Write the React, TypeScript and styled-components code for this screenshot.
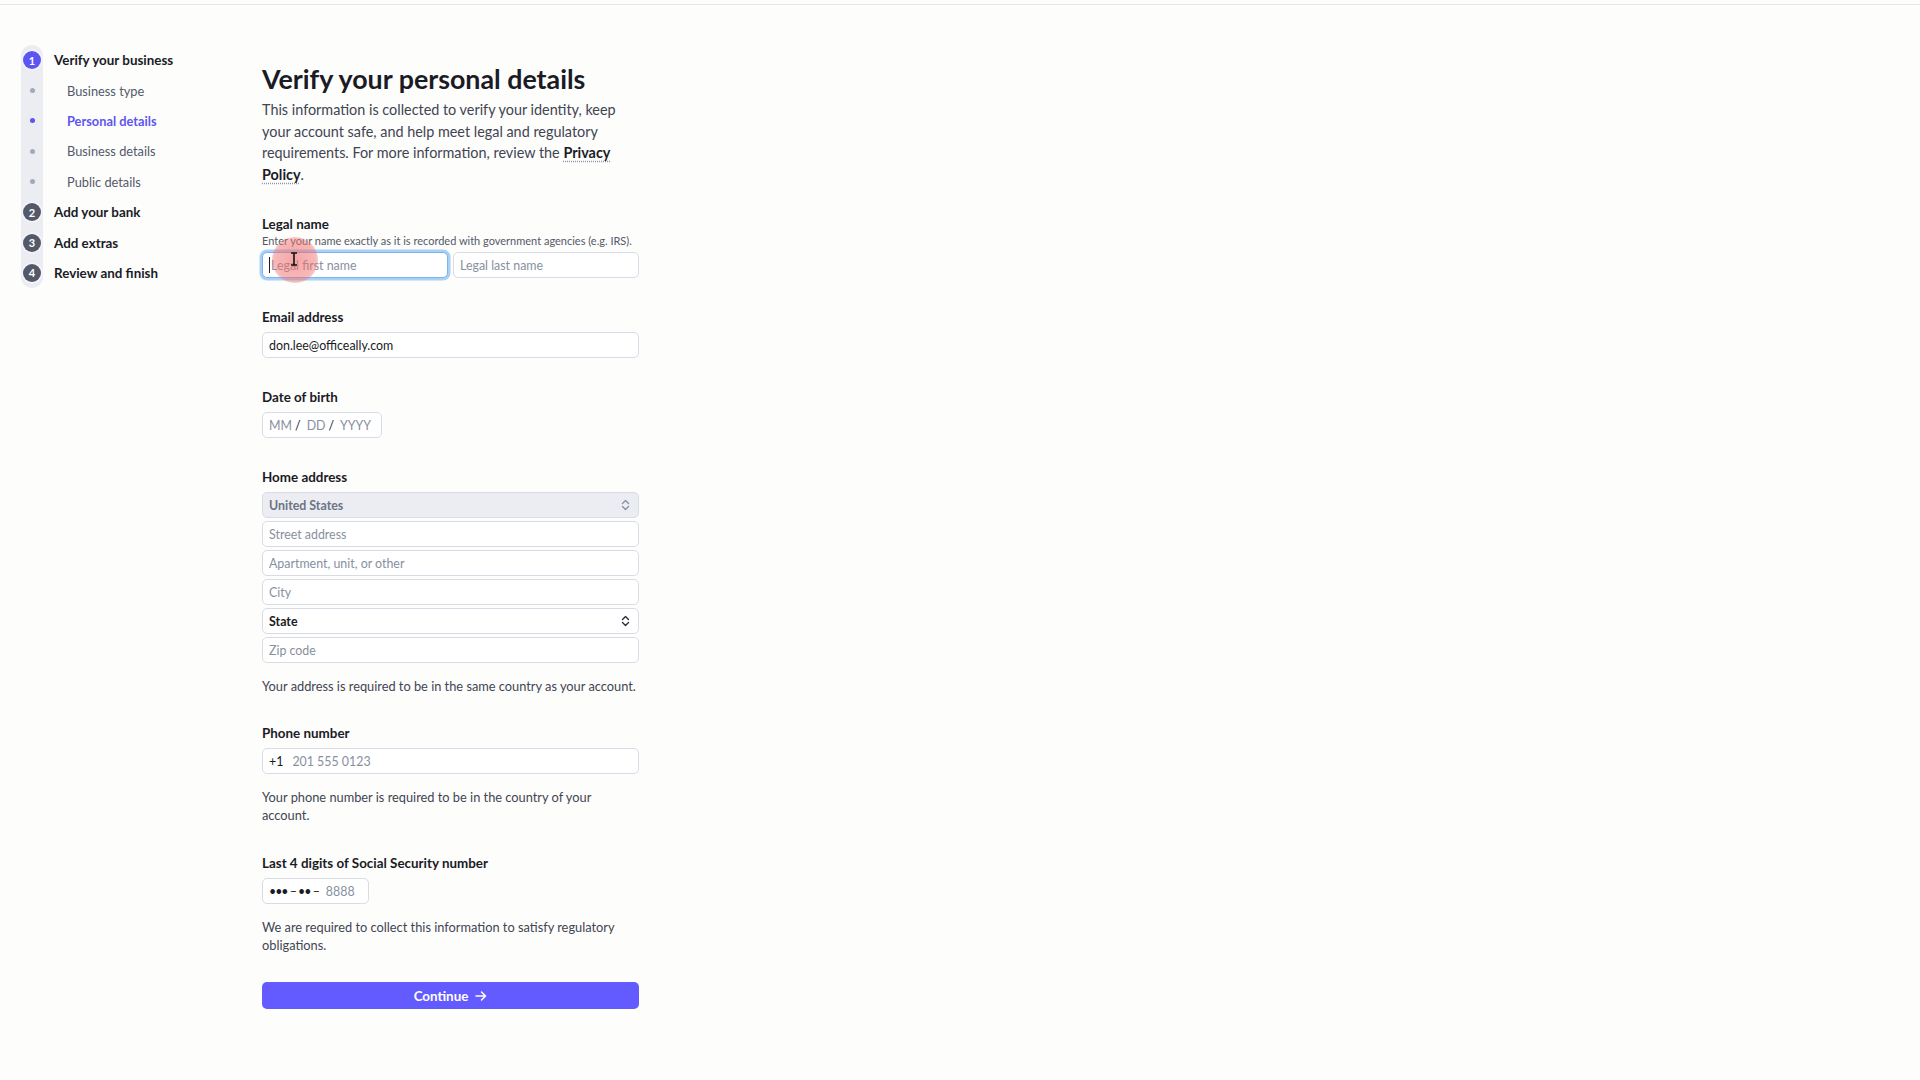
import React from "react";
import styled, { createGlobalStyle } from "styled-components";

const GlobalStyle = createGlobalStyle`
  html, body {
    margin: 0;
    padding: 0;
    background: #fdfdfc;
    font-family: Lato, "Liberation Sans", sans-serif;
    color: #1a1b25;
  }
  * { box-sizing: border-box; }
`;

const ROW = 30.4;

const Page = styled.div`
  position: relative;
  min-height: 1080px;
`;

const TopRule = styled.div`
  height: 5px;
  border-bottom: 1px solid #e3e8ef;
`;

const Layout = styled.div`
  display: flex;
  padding-left: 21px;
`;

const Sidebar = styled.nav`
  width: 241px;
  flex-shrink: 0;
  padding-top: 40px;
`;

const Steps = styled.div`
  display: grid;
  grid-template-columns: 22px 1fr;
  grid-auto-rows: ${ROW}px;
  column-gap: 11px;
`;

const Track = styled.div`
  grid-column: 1;
  grid-row: 1 / span 8;
  background: #ebedf2;
  border-radius: 11px;
`;

const MarkerCell = styled.div<{ $row: number }>`
  grid-column: 1;
  grid-row: ${(p) => p.$row};
  display: flex;
  align-items: center;
  justify-content: center;
`;

const Circle = styled.span<{ $active?: boolean }>`
  width: 18px;
  height: 18px;
  border-radius: 50%;
  background: ${(p) => (p.$active ? "#5d55f2" : "#545969")};
  box-shadow: 0 0 0 1.5px #f4f4fb;
  color: #fff;
  font-size: 11px;
  font-weight: 700;
  display: flex;
  align-items: center;
  justify-content: center;
  line-height: 1;
`;

const Dot = styled.span<{ $active?: boolean }>`
  width: 5px;
  height: 5px;
  border-radius: 50%;
  background: ${(p) => (p.$active ? "#5d55f2" : "#a3a9b8")};
`;

const StepLabel = styled.div<{ $row: number; $sub?: boolean; $active?: boolean }>`
  grid-column: 2;
  grid-row: ${(p) => p.$row};
  display: flex;
  align-items: center;
  padding-left: ${(p) => (p.$sub ? "13px" : "0")};
  font-size: ${(p) => (p.$sub ? "12.8px" : "13.4px")};
  font-weight: ${(p) => (p.$sub && !p.$active ? 400 : 700)};
  color: ${(p) => (p.$active ? "#5d55f2" : p.$sub ? "#545969" : "#1a1b25")};
  white-space: nowrap;
`;

const Main = styled.main`
  width: 377px;
  padding-top: 58px;
  display: flex;
  flex-direction: column;
`;

const Title = styled.h1`
  margin: 0;
  font-size: 26.8px;
  line-height: 32px;
  font-weight: 700;
  color: #1a1b25;
`;

const Lead = styled.p`
  margin: 4px 0 0;
  font-size: 14.4px;
  line-height: 21.5px;
  color: #414552;
`;

const DottedLink = styled.a`
  color: #1a1b25;
  font-weight: 700;
  text-decoration: underline dotted #8d93a3;
  text-underline-offset: 3px;
`;

const Field = styled.section<{ $gap?: number }>`
  margin-top: ${(p) => p.$gap ?? 30}px;
  display: flex;
  flex-direction: column;
`;

const Label = styled.div`
  font-size: 13.4px;
  line-height: 18px;
  font-weight: 700;
  color: #1a1b25;
`;

const Hint = styled.div`
  font-size: 11px;
  line-height: 15px;
  color: #545969;
  margin-bottom: 4px;
  white-space: nowrap;
`;

const Stack = styled.div`
  display: flex;
  flex-direction: column;
  gap: 3px;
  margin-top: 6px;
`;

const Pair = styled.div`
  display: grid;
  grid-template-columns: 1fr 1fr;
  gap: 5px;
`;

const Box = styled.div<{ $w?: number; $focus?: boolean; $muted?: boolean }>`
  position: relative;
  flex: none;
  height: 26px;
  width: ${(p) => (p.$w ? `${p.$w}px` : "100%")};
  border: 1px solid ${(p) => (p.$focus ? "#7fb2ec" : "#d9dce6")};
  box-shadow: ${(p) => (p.$focus ? "0 0 0 2.5px #a9d0f5" : "none")};
  border-radius: 5px;
  background: ${(p) => (p.$muted ? "#ebedf2" : "#fff")};
  display: flex;
  align-items: center;
  padding: 0 8px 0 6px;
  font-size: 12.4px;
  color: #1a1b25;
  white-space: nowrap;
`;

const Placeholder = styled.span`
  color: #87909f;
`;

const Prefix = styled.span<{ $tight?: boolean }>`
  color: #1a1b25;
  margin-right: ${(p) => (p.$tight ? "7px" : "9px")};
  letter-spacing: ${(p) => (p.$tight ? "-1px" : "0")};
`;

const Sep = styled.span`
  color: #1a1b25;
  margin: 0 6px 0 3px;
`;

const Caret = styled.span`
  width: 1px;
  height: 16px;
  background: #1a1b25;
  margin-right: 1px;
`;

const SelectText = styled.span<{ $muted?: boolean }>`
  flex: 1;
  font-weight: 700;
  color: ${(p) => (p.$muted ? "#6c7484" : "#1a1b25")};
`;

const Note = styled.p`
  margin: 14px 0 0;
  font-size: 12.8px;
  line-height: 18px;
  color: #414552;
`;

const Button = styled.button`
  margin-top: 28px;
  height: 27px;
  border: none;
  border-radius: 5px;
  background: #635bff;
  color: #fff;
  font-family: inherit;
  font-size: 13.4px;
  font-weight: 700;
  display: flex;
  align-items: center;
  justify-content: center;
  gap: 7px;
  cursor: pointer;
`;

const ClickHalo = styled.div`
  position: absolute;
  left: 272px;
  top: 237px;
  width: 46px;
  height: 46px;
  border-radius: 50%;
  background: radial-gradient(circle, rgba(240, 105, 105, 0.6) 0%, rgba(240, 115, 115, 0.5) 62%, rgba(240, 130, 130, 0) 100%);
  pointer-events: none;
`;

const Pointer = styled.svg`
  position: absolute;
  left: 290px;
  top: 252px;
  pointer-events: none;
`;

const Chevrons = ({ color }: { color: string }) => (
  <svg width="9" height="12" viewBox="0 0 9 12" fill="none">
    <path d="M1.5 4.5 4.5 1.5 7.5 4.5M1.5 7.5 4.5 10.5 7.5 7.5" stroke={color} strokeWidth="1.4" strokeLinecap="round" strokeLinejoin="round" />
  </svg>
);

const Arrow = () => (
  <svg width="12" height="12" viewBox="0 0 12 12" fill="none">
    <path d="M1 6h9.5M6.5 2l4 4-4 4" stroke="#fff" strokeWidth="1.5" strokeLinecap="round" strokeLinejoin="round" />
  </svg>
);

type Step = { label: string; kind: "step" | "sub"; num?: number; active?: boolean };

const steps: Step[] = [
  { label: "Verify your business", kind: "step", num: 1, active: true },
  { label: "Business type", kind: "sub" },
  { label: "Personal details", kind: "sub", active: true },
  { label: "Business details", kind: "sub" },
  { label: "Public details", kind: "sub" },
  { label: "Add your bank", kind: "step", num: 2 },
  { label: "Add extras", kind: "step", num: 3 },
  { label: "Review and finish", kind: "step", num: 4 },
];

export default function App() {
  return (
    <Page>
      <GlobalStyle />
      <TopRule />
      <Layout>
        <Sidebar>
          <Steps>
            <Track />
            {steps.map((s, i) => (
              <React.Fragment key={s.label}>
                <MarkerCell $row={i + 1}>
                  {s.kind === "step" ? <Circle $active={s.active}>{s.num}</Circle> : <Dot $active={s.active} />}
                </MarkerCell>
                <StepLabel $row={i + 1} $sub={s.kind === "sub"} $active={s.kind === "sub" && s.active}>
                  {s.label}
                </StepLabel>
              </React.Fragment>
            ))}
          </Steps>
        </Sidebar>

        <Main>
          <Title>Verify your personal details</Title>
          <Lead>
            This information is collected to verify your identity, keep your account safe, and help meet legal and
            regulatory requirements. For more information, review the <DottedLink>Privacy Policy</DottedLink>.
          </Lead>

          <Field>
            <Label>Legal name</Label>
            <Hint>Enter your name exactly as it is recorded with government agencies (e.g. IRS).</Hint>
            <Pair>
              <Box $focus>
                <Caret />
                <Placeholder>Legal first name</Placeholder>
              </Box>
              <Box>
                <Placeholder>Legal last name</Placeholder>
              </Box>
            </Pair>
          </Field>

          <Field>
            <Label>Email address</Label>
            <Stack>
              <Box>don.lee@officeally.com</Box>
            </Stack>
          </Field>

          <Field>
            <Label>Date of birth</Label>
            <Stack>
              <Box $w={120}>
                <Placeholder>MM</Placeholder>
                <Sep>/</Sep>
                <Placeholder>DD</Placeholder>
                <Sep>/</Sep>
                <Placeholder>YYYY</Placeholder>
              </Box>
            </Stack>
          </Field>

          <Field>
            <Label>Home address</Label>
            <Stack>
              <Box $muted>
                <SelectText $muted>United States</SelectText>
                <Chevrons color="#8a91a0" />
              </Box>
              <Box>
                <Placeholder>Street address</Placeholder>
              </Box>
              <Box>
                <Placeholder>Apartment, unit, or other</Placeholder>
              </Box>
              <Box>
                <Placeholder>City</Placeholder>
              </Box>
              <Box>
                <SelectText>State</SelectText>
                <Chevrons color="#2b2e3a" />
              </Box>
              <Box>
                <Placeholder>Zip code</Placeholder>
              </Box>
            </Stack>
            <Note>Your address is required to be in the same country as your account.</Note>
          </Field>

          <Field $gap={29}>
            <Label>Phone number</Label>
            <Stack>
              <Box>
                <Prefix>+1</Prefix>
                <Placeholder>201 555 0123</Placeholder>
              </Box>
            </Stack>
            <Note>Your phone number is required to be in the country of your account.</Note>
          </Field>

          <Field $gap={30}>
            <Label>Last 4 digits of Social Security number</Label>
            <Stack>
              <Box $w={107}>
                <Prefix $tight>••• – •• –</Prefix>
                <Placeholder>8888</Placeholder>
              </Box>
            </Stack>
            <Note>We are required to collect this information to satisfy regulatory obligations.</Note>
          </Field>

          <Button>
            Continue <Arrow />
          </Button>
        </Main>
      </Layout>

      <ClickHalo />
      <Pointer width="8" height="14" viewBox="0 0 8 14">
        <path d="M1 1h6M4 1v12M1 13h6" stroke="#111" strokeWidth="1.6" fill="none" />
      </Pointer>
    </Page>
  );
}
